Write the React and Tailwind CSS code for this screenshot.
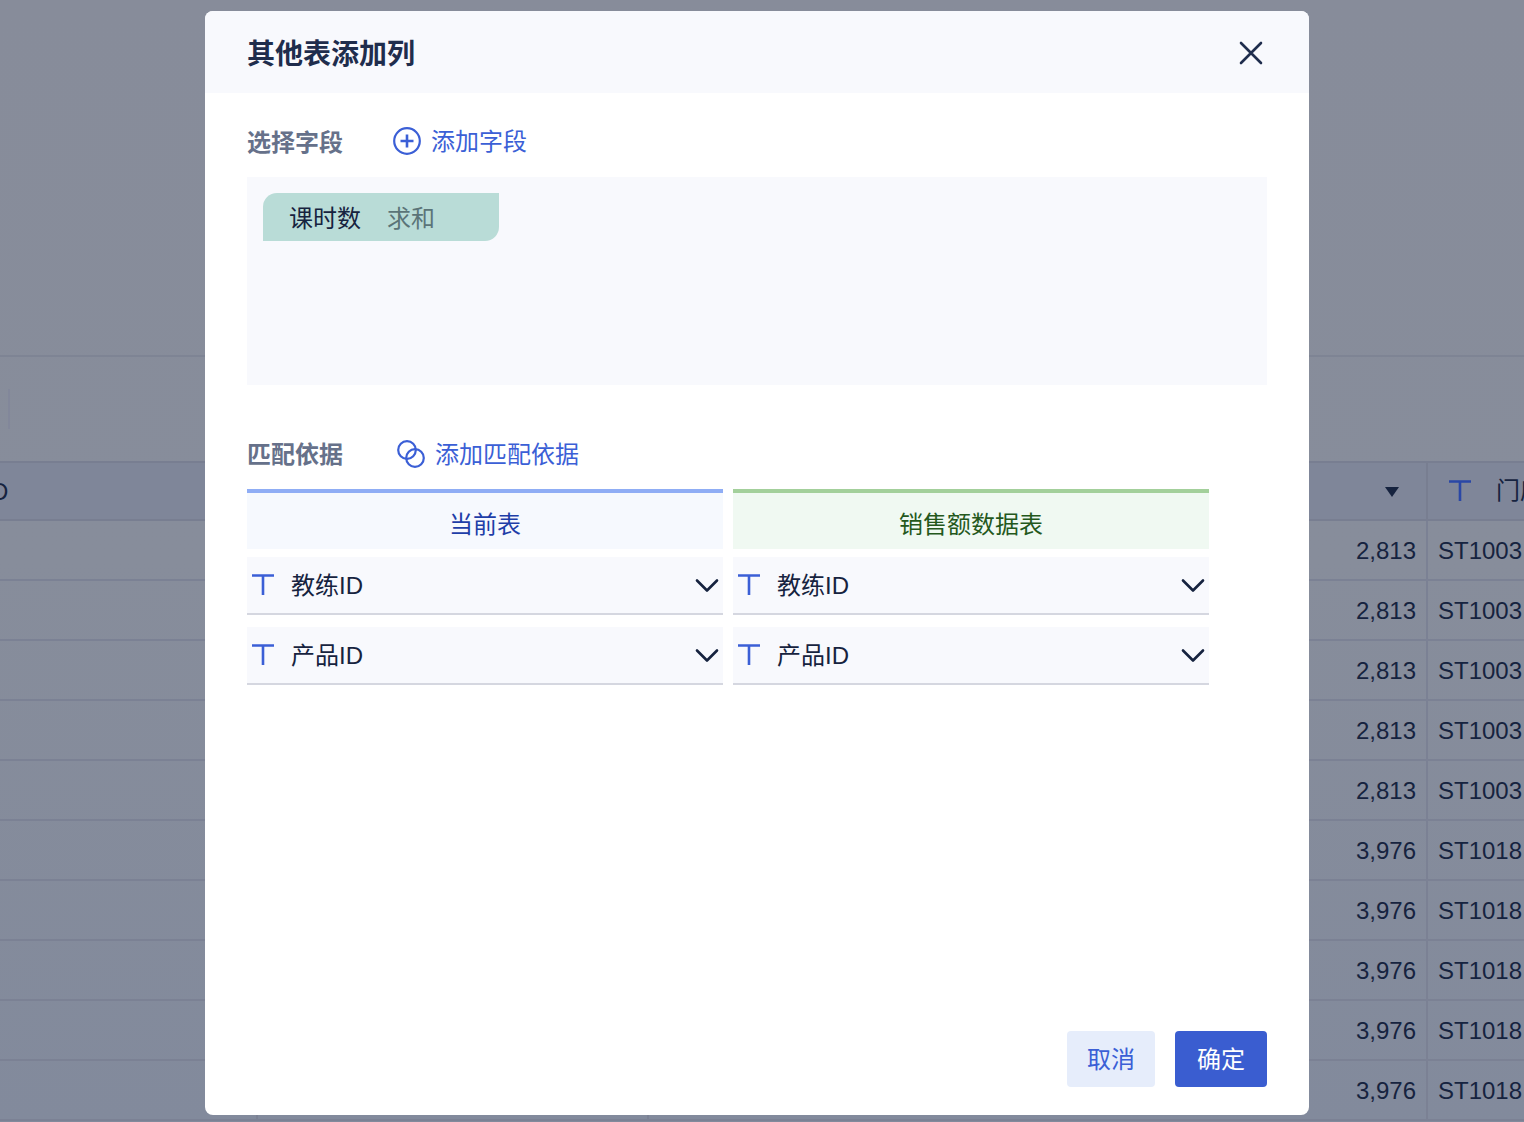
import React from 'react';

const rows = [
  ['2,813', 'ST1003'],
  ['2,813', 'ST1003'],
  ['2,813', 'ST1003'],
  ['2,813', 'ST1003'],
  ['2,813', 'ST1003'],
  ['3,976', 'ST1018'],
  ['3,976', 'ST1018'],
  ['3,976', 'ST1018'],
  ['3,976', 'ST1018'],
  ['3,976', 'ST1018'],
];

const fields = ['教练ID', '产品ID'];

function TextIcon({ className }) {
  return (
    <svg width="22" height="22" viewBox="0 0 22 22" fill="none" className={className}>
      <path d="M0 1.5H22M11 1.5V21" stroke="currentColor" strokeWidth="2.6" />
    </svg>
  );
}

function Chevron() {
  return (
    <svg width="24" height="16" viewBox="0 0 24 16" fill="none" className="mt-[1px]">
      <path d="M2 2.5L12 12.5L22 2.5" stroke="#16233f" strokeWidth="2.6" strokeLinecap="round" strokeLinejoin="round" />
    </svg>
  );
}

function FieldSelect({ label }) {
  return (
    <div className="flex h-[58px] items-center justify-between border-b-2 border-[#d5d7e0] bg-[#f8f9fd] pl-[5px] pr-[4px]">
      <div className="flex items-center gap-[17px]">
        <TextIcon className="text-[#3b5fd6]" />
        <span className="pt-[2px] text-[24px] leading-none text-[#16233f]">{label}</span>
      </div>
      <Chevron />
    </div>
  );
}

function Backdrop() {
  return (
    <div className="flex h-[1122px] flex-col overflow-hidden bg-[linear-gradient(180deg,#878c9a_0%,#878d9b_50%,#828a9c_100%)] text-[24px] text-[#16233f]">
      <div className="h-[357px] shrink-0 border-b-2 border-[#7e8494]" />
      <div className="flex h-[104px] shrink-0 items-center pl-[8px]">
        <div className="h-[40px] w-[2px] bg-[#82879a]" />
      </div>
      <div className="flex h-[60px] shrink-0 border-y-2 border-[#787e91] bg-[#7f8699]">
        <div className="flex w-[1428px] shrink-0 items-center justify-between border-r-2 border-[#787e91] pr-[27px] pt-[2px]">
          <span className="ml-[-9px] leading-none">D</span>
          <span className="h-0 w-0 border-x-[7px] border-t-[10px] border-x-transparent border-t-[#16233f]" />
        </div>
        <div className="flex items-center gap-[25px] pl-[21px] whitespace-nowrap">
          <TextIcon className="text-[#2a47a6]" />
          <span className="leading-none">门店ID</span>
        </div>
      </div>
      {rows.map((row, i) => (
        <div key={i} className="flex h-[60px] shrink-0 border-b-2 border-[#7b8194]">
          <div className="w-[258px] shrink-0 border-r-2 border-[#7b8194]" />
          <div className="w-[391px] shrink-0 border-r-2 border-[#7b8194]" />
          <div className="flex w-[779px] shrink-0 items-center justify-end border-r-2 border-[#7b8194] pr-[10px] pt-[2px]">
            {row[0]}
          </div>
          <div className="flex items-center pl-[10px] pt-[2px]">{row[1]}</div>
        </div>
      ))}
    </div>
  );
}

export default function App() {
  return (
    <div className="relative h-[1122px] overflow-hidden font-['Liberation_Sans','Noto_Sans_CJK_SC',sans-serif]">
      <Backdrop />

      <div className="absolute left-[205px] top-[11px] flex h-[1104px] w-[1104px] flex-col overflow-hidden rounded-[8px] bg-white">
        <div className="flex h-[82px] shrink-0 items-center justify-between bg-[#f8f9fd] pl-[42px] pr-[46px]">
          <h2 className="pt-[6px] text-[28px] font-semibold leading-none text-[#1f2d4d]">其他表添加列</h2>
          <svg width="24" height="24" viewBox="0 0 24 24" fill="none" className="mt-[2px]">
            <path d="M2 2L22 22M22 2L2 22" stroke="#1f2d4d" strokeWidth="2.6" strokeLinecap="round" />
          </svg>
        </div>

        <div className="flex flex-1 flex-col px-[42px]">
          <div className="mt-[34px] flex h-[28px] items-center">
            <span className="w-[146px] pt-[4px] text-[24px] font-semibold leading-none text-[#66718a]">选择字段</span>
            <svg width="28" height="28" viewBox="0 0 28 28" fill="none" className="text-[#3b5fd6]">
              <circle cx="14" cy="14" r="12.8" stroke="currentColor" strokeWidth="2.2" />
              <path d="M7.5 14H20.5M14 7.5V20.5" stroke="currentColor" strokeWidth="2.6" />
            </svg>
            <span className="ml-[10px] pt-[2px] text-[24px] leading-none text-[#3b5fd6]">添加字段</span>
          </div>

          <div className="mt-[22px] h-[208px] w-[1020px] bg-[#f8f9fd] p-[16px]">
            <div className="flex h-[48px] w-[236px] items-center gap-[26px] rounded-tl-[14px] rounded-br-[14px] bg-[#b9dcd7] pl-[26px] pt-[4px] text-[24px] leading-none">
              <span className="text-[#16233f]">课时数</span>
              <span className="text-[#5b7478]">求和</span>
            </div>
          </div>

          <div className="mt-[55px] flex h-[28px] items-center">
            <span className="w-[150px] pt-[1px] text-[24px] font-semibold leading-none text-[#66718a]">匹配依据</span>
            <svg width="28" height="28" viewBox="0 0 28 28" fill="none" className="text-[#3b5fd6]">
              <circle cx="10" cy="10" r="8.8" stroke="currentColor" strokeWidth="2.2" />
              <circle cx="18" cy="18" r="8.8" stroke="currentColor" strokeWidth="2.2" />
            </svg>
            <span className="ml-[10px] pt-[1px] text-[24px] leading-none text-[#3b5fd6]">添加匹配依据</span>
          </div>

          <div className="mt-[21px] grid w-[962px] grid-cols-2 gap-x-[10px]">
            <div className="flex flex-col">
              <div className="flex h-[60px] items-center justify-center border-t-4 border-[#8fadf5] bg-[#f6f9fe] pt-[7px] text-[24px] leading-none text-[#1e3ea8]">
                当前表
              </div>
              <div className="mt-[8px] flex flex-col gap-[12px]">
                {fields.map((f) => (
                  <FieldSelect key={f} label={f} />
                ))}
              </div>
            </div>
            <div className="flex flex-col">
              <div className="flex h-[60px] items-center justify-center border-t-4 border-[#a3d09b] bg-[#f0f9f2] pt-[7px] text-[24px] leading-none text-[#24581c]">
                销售额数据表
              </div>
              <div className="mt-[8px] flex flex-col gap-[12px]">
                {fields.map((f) => (
                  <FieldSelect key={f} label={f} />
                ))}
              </div>
            </div>
          </div>

          <div className="mb-[28px] mt-auto flex justify-end gap-[20px]">
            <button className="h-[56px] w-[88px] rounded-[4px] bg-[#e6edfb] pt-[2px] text-[24px] text-[#3b5fd6]">取消</button>
            <button className="h-[56px] w-[92px] rounded-[4px] bg-[#3a5dd0] pt-[2px] text-[24px] text-white">确定</button>
          </div>
        </div>
      </div>
    </div>
  );
}
